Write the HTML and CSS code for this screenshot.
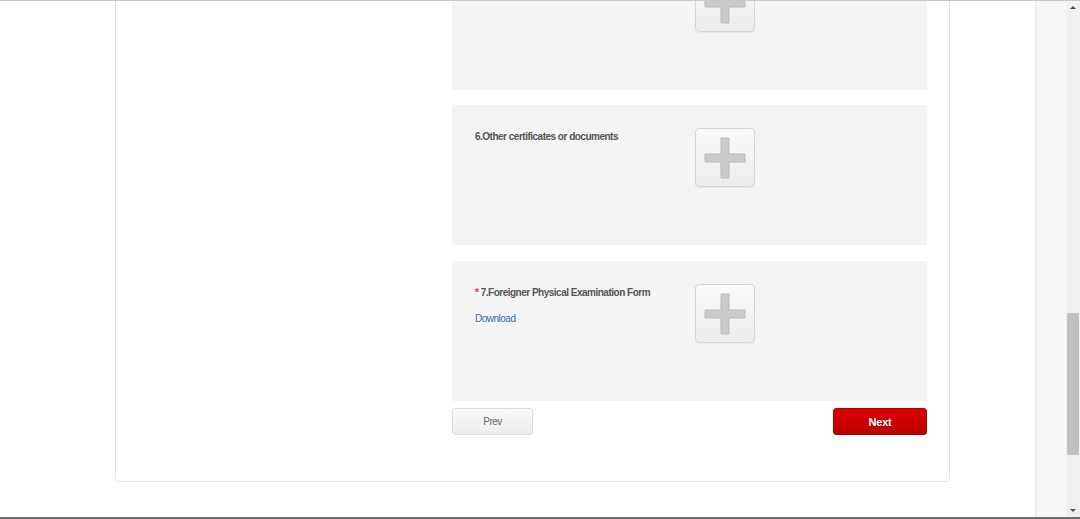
FILE: index.html
```html
<!DOCTYPE html>
<html lang="en">
<head>
    <meta charset="UTF-8">
    <meta name="viewport" content="width=device-width, initial-scale=1.0">
    <title>Upload documents</title>
    <link rel="stylesheet" href="styles.css">
</head>
<body>
    <div class="screen">
        <div class="page">
            <div class="card">
                <div class="aside"></div>
                <div class="main">
                    <div class="uploads">
                        <div class="panel">
                            <div class="label"></div>
                            <div class="add">
                                <svg width="42" height="42" viewBox="0 0 42 42"><path d="M17 1h8v16h16v8H25v16h-8V25H1v-8h16z" fill="#cbcbcb" stroke="#b9b9b9" stroke-width="1"/></svg>
                            </div>
                        </div>

                        <div class="panel">
                            <div class="label">
                                <div class="title">6.Other certificates or documents</div>
                            </div>
                            <div class="add">
                                <svg width="42" height="42" viewBox="0 0 42 42"><path d="M17 1h8v16h16v8H25v16h-8V25H1v-8h16z" fill="#cbcbcb" stroke="#b9b9b9" stroke-width="1"/></svg>
                            </div>
                        </div>

                        <div class="panel">
                            <div class="label">
                                <div class="title"><span class="req">*</span> 7.Foreigner Physical Examination Form</div>
                                <a class="download" href="#">Download</a>
                            </div>
                            <div class="add">
                                <svg width="42" height="42" viewBox="0 0 42 42"><path d="M17 1h8v16h16v8H25v16h-8V25H1v-8h16z" fill="#cbcbcb" stroke="#b9b9b9" stroke-width="1"/></svg>
                            </div>
                        </div>
                    </div>

                    <div class="actions">
                        <button class="btn prev" type="button">Prev</button>
                        <button class="btn next" type="button">Next</button>
                    </div>
                </div>
            </div>
        </div>
        <div class="gutter"></div>
        <div class="scrollbar">
            <div class="arrow up"></div>
            <div class="track"><div class="thumb"></div></div>
            <div class="arrow down"></div>
        </div>
    </div>
</body>
</html>
```

FILE: styles.css
```css
html, body {
    margin: 0;
    height: 100%;
}

body {
    font-family: "Liberation Sans", Arial, sans-serif;
    box-sizing: border-box;
    border-top: 1px solid #c9c9c9;
    border-bottom: 2px solid #6e6e6e;
    overflow: hidden;
    background: #fff;
}

.screen {
    display: flex;
    height: 100%;
}

.page {
    flex: 1;
    overflow: hidden;
}

.card {
    display: flex;
    box-sizing: border-box;
    width: 835px;
    margin: -81px 0 0 115px;
    padding: 29px 22px 46px 0;
    border: 1px solid #e4e4e4;
    border-radius: 4px;
    background: #fff;
}

.aside {
    width: 336px;
}

.main {
    width: 475px;
}

.uploads {
    display: flex;
    flex-direction: column;
    gap: 15px;
}

.panel {
    display: flex;
    box-sizing: border-box;
    height: 140px;
    padding: 23px;
    background: #f4f4f4;
}

.panel:last-child {
    margin-top: 1px;
}

.label {
    width: 220px;
    padding-top: 2px;
}

.title {
    font-size: 10px;
    font-weight: bold;
    line-height: 14px;
    letter-spacing: -0.5px;
    color: #555;
}

.req {
    color: #e5322d;
}

.download {
    display: block;
    margin-top: 12px;
    font-size: 10px;
    line-height: 14px;
    letter-spacing: -0.5px;
    color: #3a6ca4;
    text-decoration: none;
}

.add {
    display: flex;
    align-items: center;
    justify-content: center;
    box-sizing: border-box;
    width: 60px;
    height: 59px;
    border: 1px solid #d6d6d6;
    border-radius: 4px;
    background: linear-gradient(#fbfbfb, #ebebeb);
    box-shadow: 0 1px 1px rgba(0, 0, 0, 0.05);
}

.actions {
    display: flex;
    justify-content: space-between;
    margin-top: 7px;
}

.btn {
    height: 27px;
    border-radius: 3px;
    font-family: "Liberation Sans", Arial, sans-serif;
    cursor: pointer;
}

.prev {
    width: 81px;
    border: 1px solid #dcdcdc;
    background: linear-gradient(#fafafa, #ececec);
    color: #666;
    font-size: 10px;
    letter-spacing: -0.5px;
}

.next {
    width: 94px;
    border: 1px solid #b10000;
    background: linear-gradient(#dc0000, #b70000);
    color: #fff;
    font-size: 11px;
    font-weight: bold;
    letter-spacing: -0.2px;
}

.gutter {
    width: 30px;
    background: #f7f7f7;
    border-left: 1px solid #e9e9e9;
}

.scrollbar {
    display: flex;
    flex-direction: column;
    width: 14px;
    background: #f0f0f0;
}

.arrow {
    height: 14px;
    position: relative;
}

.arrow::after {
    content: "";
    position: absolute;
    left: 4px;
    top: 5px;
    border-left: 3px solid transparent;
    border-right: 3px solid transparent;
}

.arrow.up::after {
    border-bottom: 3px solid #505050;
}

.arrow.down::after {
    top: 6px;
    border-top: 3px solid #505050;
}

.track {
    flex: 1;
}

.thumb {
    height: 142px;
    margin: 298px 1px 0;
    background: #c1c1c1;
}
```
